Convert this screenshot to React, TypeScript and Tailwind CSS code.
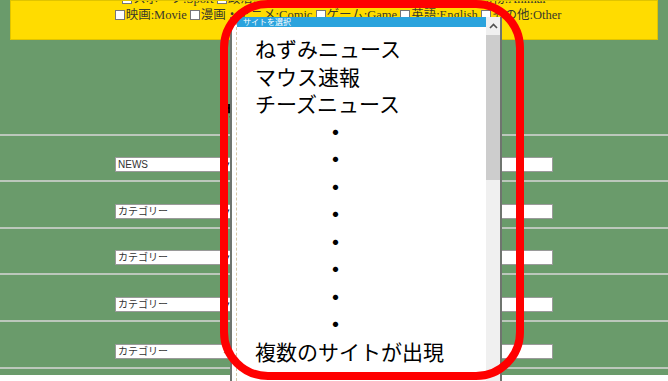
import React from 'react';

const rowHeights = ['h-[46px]', 'h-[47px]', 'h-[46px]', 'h-[47px]', 'h-[47px]'];
const rowLabels = ['NEWS', 'カテゴリー', 'カテゴリー', 'カテゴリー', 'カテゴリー'];

const sites = ['ねずみニュース', 'マウス速報', 'チーズニュース'];

const Checkbox = () => (
  <span className="inline-block w-[10px] h-[10px] border border-[#777] bg-white mr-[1px] align-[-1px]" />
);

const Banner = () => (
  <div className="mx-[10px] h-[40px] bg-[#ffdc00] border border-[#e0c400] overflow-hidden flex flex-col justify-end pb-[16px] text-[12.5px] leading-[16px] text-[#3a3a2a] font-['Liberation_Serif','Noto_Sans_CJK_JP',serif]">
    <div className="text-center whitespace-nowrap">
      <Checkbox />スポーツ:Sport <Checkbox />政治:Politics <Checkbox />経済:Economy <Checkbox />科学:Science <Checkbox />動物:Animal
    </div>
    <div className="text-center whitespace-nowrap pl-[8px]">
      <Checkbox />映画:Movie <Checkbox />漫画・アニメ:Comic <Checkbox />ゲーム:Game <Checkbox />英語:English <Checkbox />その他:Other
    </div>
  </div>
);

const Row = ({ h, label, last }: { h: string; label: string; last: boolean }) => (
  <div className={`${h} border-t-2 border-[#bcc7bc] flex items-end justify-between px-[115px] pb-[8px]`}>
    <div className="w-[118px] h-[15px] bg-white border border-[#9a9a9a] flex items-center justify-between px-[2px] text-[10px] text-[#333] font-['Liberation_Sans','Noto_Sans_CJK_JP',sans-serif]">
      <span>{label}</span>
      <span className="text-[9px]">{last ? '⌄' : '▾'}</span>
    </div>
    <div className="w-[115px] h-[15px] bg-white border border-[#9a9a9a]" />
  </div>
);

const SitePopup = () => (
  <div className="absolute left-[230px] top-[17px] bottom-0 w-[272px] bg-white border-x-2 border-[#6f756f] flex">
    <div className="flex-1 pl-[4px] flex">
      <div className="flex-1 border-l border-dashed border-[#d6c6a6] flex flex-col">
        <div className="h-[10px] bg-[#2aa3dd] text-white text-[8px] leading-[10px] pl-[6px] font-['Noto_Sans_CJK_JP',sans-serif]">
          サイトを選択
        </div>
        <div className="pt-[8px] pl-[18px] text-[21px] leading-[27.5px] text-black font-['Noto_Sans_CJK_JP',sans-serif]">
          {sites.map((s) => (
            <div key={s}>{s}</div>
          ))}
          {Array.from({ length: 8 }).map((_, i) => (
            <div key={i} className="pl-[70px] font-bold">・</div>
          ))}
          <div>複数のサイトが出現</div>
        </div>
      </div>
    </div>
    <div className="w-[14px] bg-[#f0f0f0] flex flex-col">
      <div className="h-[18px] flex items-center justify-center">
        <svg width="9" height="6" viewBox="0 0 9 6">
          <path d="M1 5 L4.5 1.5 L8 5" stroke="#505050" strokeWidth="1.6" fill="none" />
        </svg>
      </div>
      <div className="h-[145px] bg-[#cdcdcd]" />
    </div>
  </div>
);

export default function App() {
  return (
    <div className="relative w-[668px] h-[381px] bg-white overflow-hidden">
      <div className="h-[375px] bg-[#6a9b6b]">
        <Banner />
        <div className="h-[94px] pl-[224px] pt-[58px] text-[16px] font-bold text-black font-['Noto_Sans_CJK_JP',sans-serif] whitespace-nowrap">
          サイトを選択
        </div>
        {rowHeights.map((h, i) => (
          <Row key={i} h={h} label={rowLabels[i]} last={i === rowHeights.length - 1} />
        ))}
        <div className="border-t-2 border-[#bcc7bc]" />
      </div>
      <SitePopup />
      <div className="absolute left-[220px] top-0 w-[304px] h-[380px] border-[8px] border-[#ff0000] rounded-[48px]" />
    </div>
  );
}
